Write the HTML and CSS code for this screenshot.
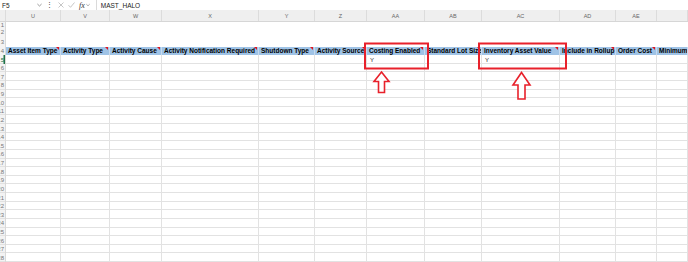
FILE: index.html
```html
<!DOCTYPE html>
<html lang="en">
<head>
    <meta charset="UTF-8">
    <meta name="viewport" content="width=device-width, initial-scale=1.0">
    <title>Asset Items - Sheet</title>
    <link rel="stylesheet" href="styles.css">
</head>
<body>
    <div class="formula-bar">
        <div class="name-box">
            <span>F5</span>
            <svg class="chev" viewBox="0 0 6 4"><polyline points="0.5,0.8 3,3.2 5.5,0.8"/></svg>
        </div>
        <div class="dots">&#8942;</div>
        <svg class="icon cancel" viewBox="0 0 6 6"><path d="M0.5 0.5 L5.5 5.5 M5.5 0.5 L0.5 5.5"/></svg>
        <svg class="icon enter" viewBox="0 0 7 6"><polyline points="0.5,3.2 2.5,5.3 6.5,0.5"/></svg>
        <span class="fx">fx</span>
        <svg class="chev small" viewBox="0 0 6 4"><polyline points="0.5,0.8 3,3.2 5.5,0.8"/></svg>
        <div class="formula">MAST_HALO</div>
    </div>

    <div class="col-heads">
        <div class="corner"></div>
        <div>U</div>
        <div>V</div>
        <div>W</div>
        <div>X</div>
        <div>Y</div>
        <div>Z</div>
        <div>AA</div>
        <div>AB</div>
        <div>AC</div>
        <div>AD</div>
        <div>AE</div>
        <div></div>
    </div>

    <div class="top-rows">
        <div class="rownums">
            <div class="rn r1">1</div>
            <div class="rn r2">2</div>
            <div class="rn r3">3</div>
        </div>
        <div class="blank"></div>
    </div>

    <div class="head-row">
        <div class="rn">4</div>
        <div class="hcell">Asset Item Type</div>
        <div class="hcell">Activity Type</div>
        <div class="hcell">Activity Cause</div>
        <div class="hcell">Activity Notification Required</div>
        <div class="hcell">Shutdown Type</div>
        <div class="hcell">Activity Source</div>
        <div class="hcell">Costing Enabled</div>
        <div class="hcell">Standard Lot Size</div>
        <div class="hcell">Inventory Asset Value</div>
        <div class="hcell">Include in Rollup</div>
        <div class="hcell">Order Cost</div>
        <div class="hcell cut">Minimum Order Quantity</div>
    </div>

    <div class="rows">
        <div class="col rownums">
            <div class="rn active">5</div>
            <div class="rn">6</div>
            <div class="rn">7</div>
            <div class="rn">8</div>
            <div class="rn">9</div>
            <div class="rn">10</div>
            <div class="rn">11</div>
            <div class="rn">12</div>
            <div class="rn">13</div>
            <div class="rn">14</div>
            <div class="rn">15</div>
            <div class="rn">16</div>
            <div class="rn">17</div>
            <div class="rn">18</div>
            <div class="rn">19</div>
            <div class="rn">20</div>
            <div class="rn">21</div>
            <div class="rn">22</div>
            <div class="rn">23</div>
            <div class="rn">24</div>
            <div class="rn">25</div>
            <div class="rn">26</div>
            <div class="rn">27</div>
            <div class="rn">28</div>
        </div>
        <div class="col"></div>
        <div class="col"></div>
        <div class="col"></div>
        <div class="col"></div>
        <div class="col"></div>
        <div class="col"></div>
        <div class="col"><div class="val">Y</div></div>
        <div class="col"></div>
        <div class="col"><div class="val">Y</div></div>
        <div class="col"></div>
        <div class="col"></div>
        <div class="col"></div>
    </div>

    <!-- red callouts drawn over the sheet -->
    <svg class="marks" viewBox="0 0 688 262">
        <rect x="365" y="43.5" width="63" height="25"/>
        <rect x="479" y="43.5" width="87" height="25"/>
        <path d="M381.5 72 L389 81.5 L384.5 81.5 L384.5 92.5 L378.5 92.5 L378.5 81.5 L374 81.5 Z"/>
        <path d="M521.5 72.5 L530 85 L525 85 L525 99 L518 99 L518 85 L513 85 Z"/>
    </svg>
</body>
</html>
```

FILE: styles.css
```css
* {
    box-sizing: border-box;
}

:root {
    --cols: 6px 55px 49px 52px 97px 56px 52px 58px 57px 78px 56px 41px 1fr;
    --row: 8.63px;
    --grid-line: #e2e2e2;
}

body {
    margin: 0;
    width: 688px;
    height: 262px;
    overflow: hidden;
    position: relative;
    background-color: #fff;
    font-family: 'Liberation Sans', Arial, sans-serif;
}

/* formula bar */
.formula-bar {
    display: flex;
    align-items: center;
    height: 10px;
    font-size: 6.5px;
    color: #222;
}

.name-box {
    display: flex;
    align-items: center;
    justify-content: space-between;
    width: 45px;
    height: 100%;
    padding: 0 3px 0 2px;
}

.chev {
    width: 5px;
    height: 4px;
    fill: none;
    stroke: #666;
    stroke-width: 0.8;
}

.chev.small {
    width: 4px;
    margin-left: 1px;
}

.dots {
    width: 9px;
    text-align: center;
    font-size: 7px;
    color: #444;
}

.icon {
    height: 6px;
    fill: none;
    stroke: #b8b8b8;
    stroke-width: 0.8;
}

.cancel {
    width: 6px;
    margin-left: 4px;
}

.enter {
    width: 7px;
    margin-left: 4px;
}

.fx {
    margin-left: 4px;
    font-family: 'Liberation Serif', serif;
    font-style: italic;
    font-size: 8px;
    color: #333;
}

.formula {
    flex: 1;
    height: 100%;
    display: flex;
    align-items: center;
    margin-left: 6px;
    padding-left: 4px;
    border-left: 1px solid #dadada;
}

/* column letters */
.col-heads {
    display: grid;
    grid-template-columns: var(--cols);
    height: 12px;
    background-color: #efefef;
    border-bottom: 1px solid #d6d6d6;
}

.col-heads div {
    display: flex;
    align-items: center;
    justify-content: center;
    font-size: 5.5px;
    color: #666;
    border-right: 1px solid #dcdcdc;
}

/* rows 1-3 without gridlines */
.top-rows {
    display: grid;
    grid-template-columns: 6px 1fr;
    height: 24.5px;
}

.rownums {
    background-color: #f3f3f3;
    border-right: 1px solid #d9d9d9;
}

.rn {
    display: flex;
    align-items: center;
    justify-content: flex-end;
    height: var(--row);
    padding-right: 1px;
    overflow: hidden;
    font-size: 6px;
    color: #777;
}

.rn.r1 {
    height: 5px;
}

.rn.r2 {
    height: 9.5px;
}

.rn.r3 {
    height: 10px;
}

.rn.active {
    color: #217346;
    box-shadow: inset -1.5px 0 0 #217346;
}

/* header row 4 */
.head-row {
    display: grid;
    grid-template-columns: var(--cols);
    height: 8.7px;
}

.head-row .rn {
    height: 100%;
    background-color: #f3f3f3;
    border-right: 1px solid #d9d9d9;
}

.hcell {
    position: relative;
    display: flex;
    align-items: center;
    padding-left: 2px;
    overflow: hidden;
    white-space: nowrap;
    font-size: 6.5px;
    font-weight: bold;
    color: #000;
    background-color: #9fc3e6;
    border-right: 1px solid #c7daee;
}

.hcell::after {
    content: "";
    position: absolute;
    top: 0;
    right: 1px;
    border-left: 3px solid transparent;
    border-top: 3px solid #e0141e;
}

.hcell.cut::after {
    display: none;
}

/* body rows */
.rows {
    display: grid;
    grid-template-columns: var(--cols);
    height: 210px;
}

.col {
    border-right: 1px solid var(--grid-line);
    background-image: repeating-linear-gradient(to bottom,
        transparent 0, transparent 7.63px,
        var(--grid-line) 7.63px, var(--grid-line) 8.63px);
}

.col.rownums {
    background-color: #f3f3f3;
    border-right: 1px solid #d9d9d9;
}

.val {
    display: flex;
    align-items: center;
    height: var(--row);
    padding-left: 3px;
    font-size: 6px;
    color: #222;
}

/* annotation overlay */
.marks {
    position: absolute;
    top: 0;
    left: 0;
    width: 688px;
    height: 262px;
    pointer-events: none;
}

.marks rect {
    fill: none;
    stroke: #e8212b;
    stroke-width: 2;
}

.marks path {
    fill: #fff;
    stroke: #e8212b;
    stroke-width: 1.6;
    stroke-linejoin: miter;
}
```
